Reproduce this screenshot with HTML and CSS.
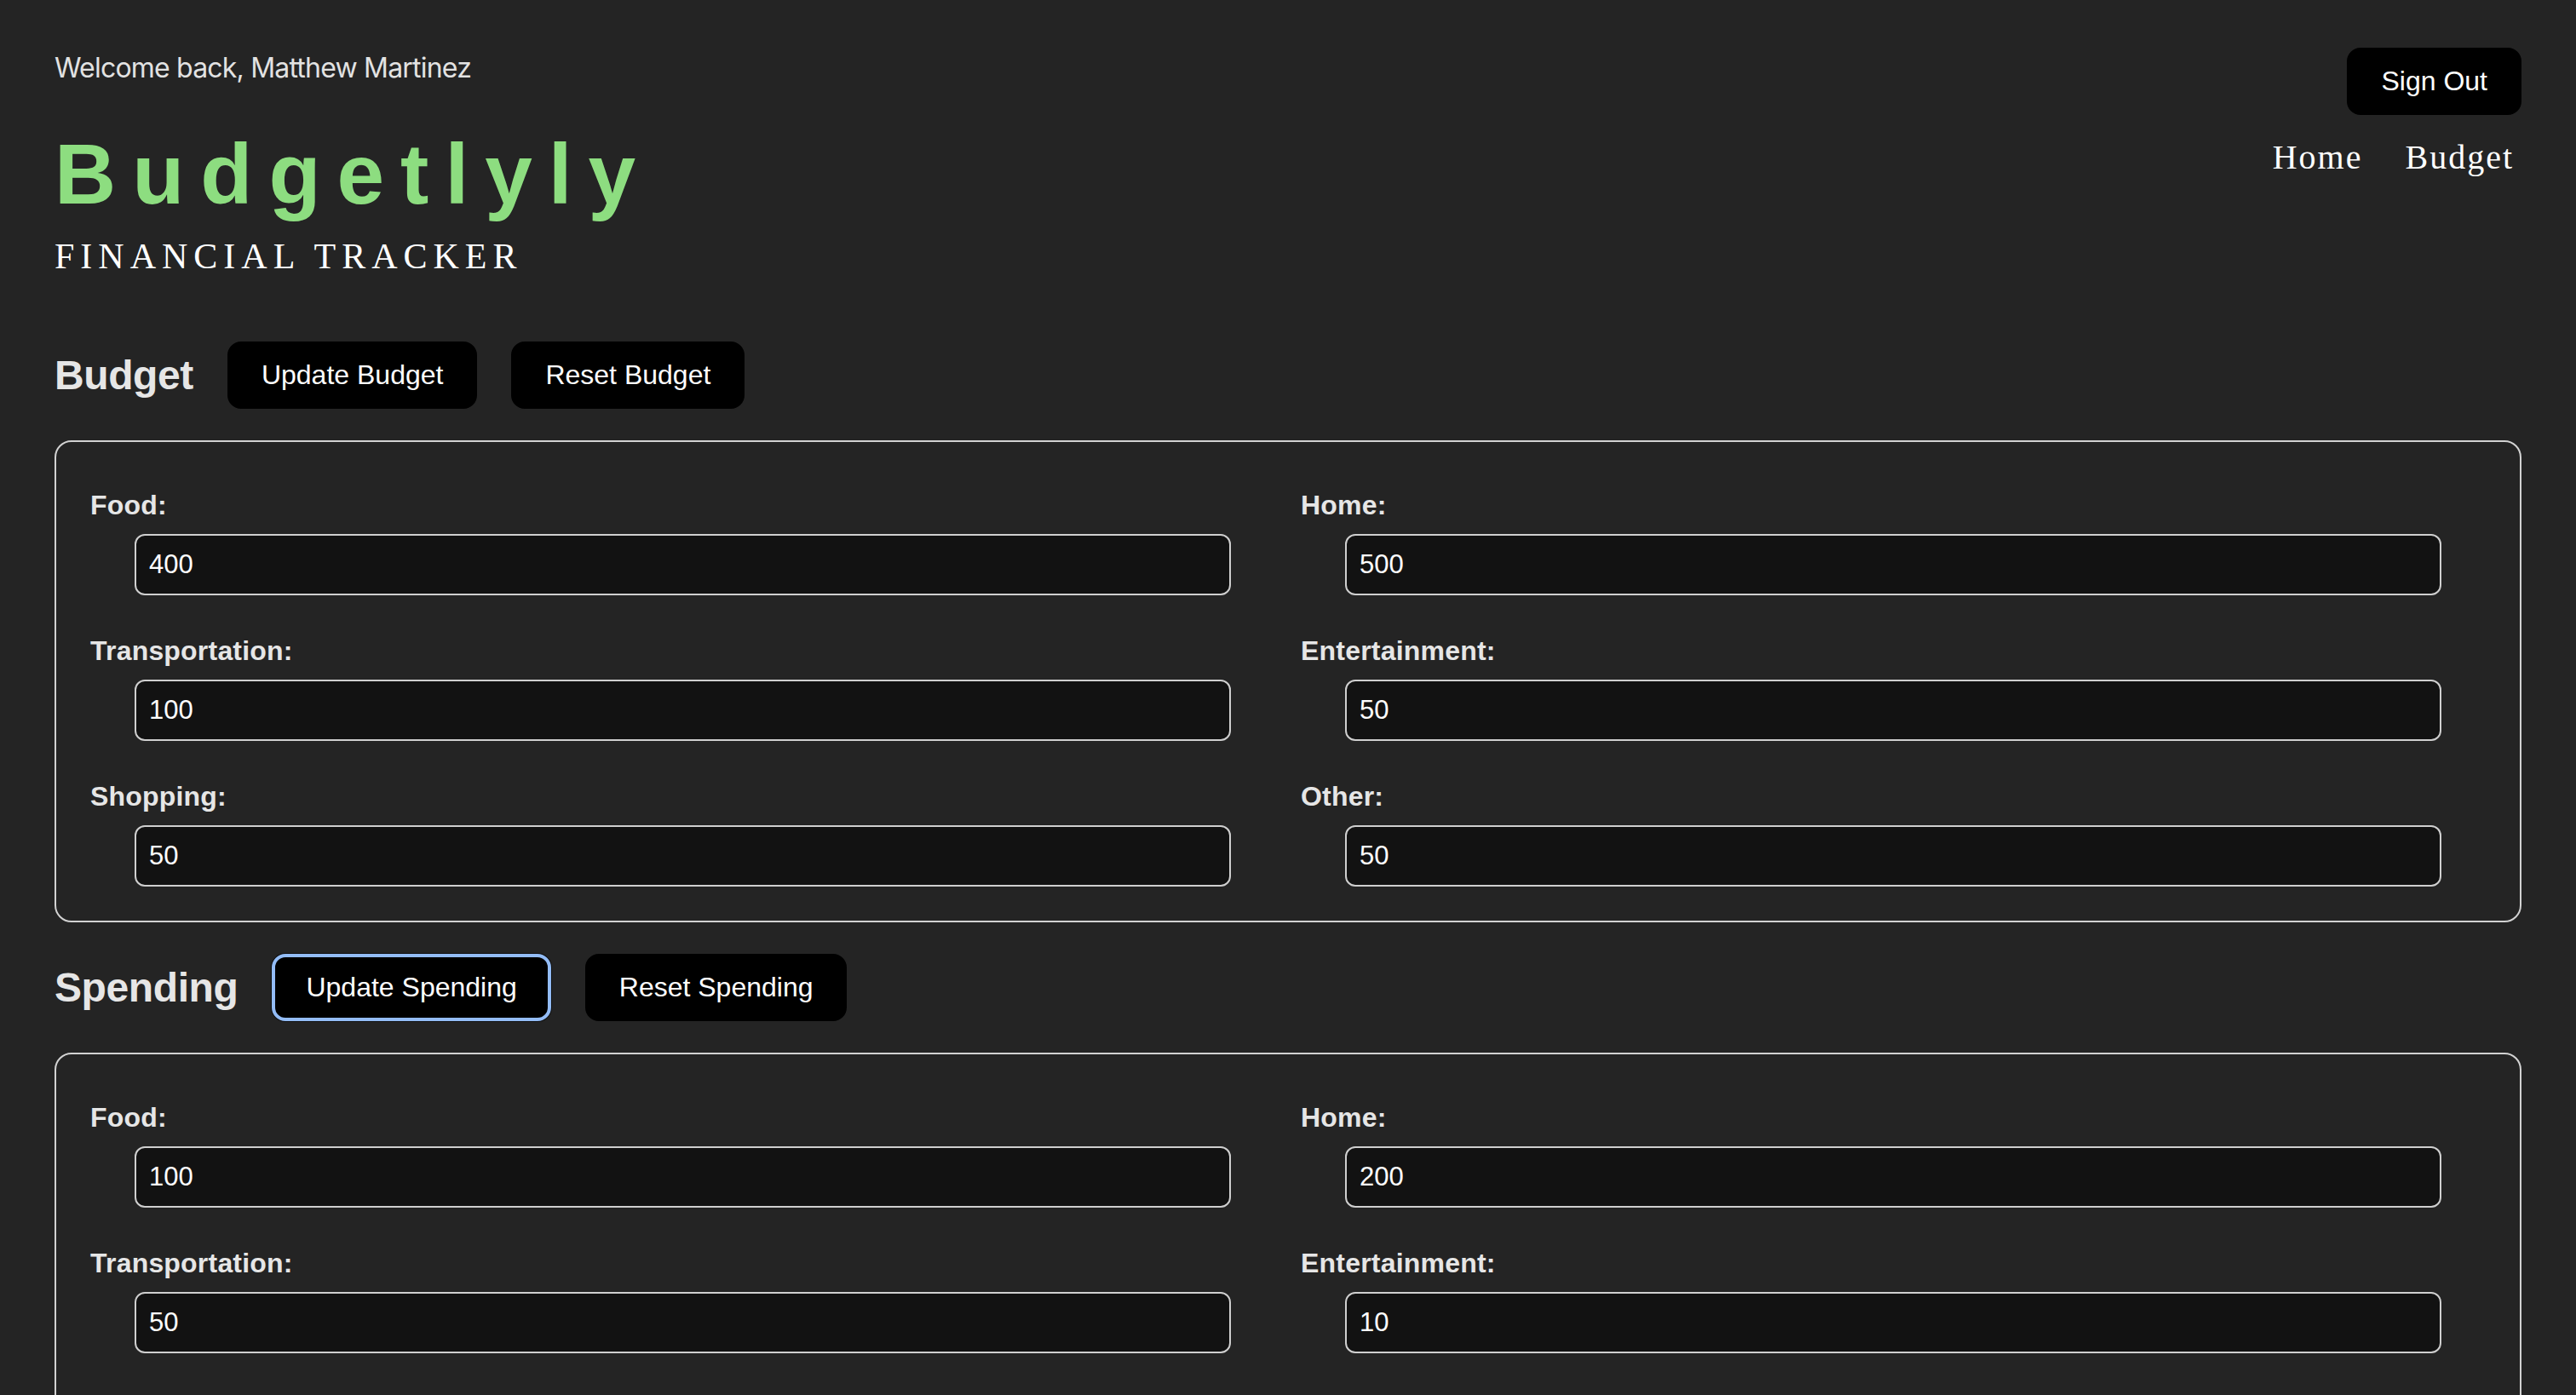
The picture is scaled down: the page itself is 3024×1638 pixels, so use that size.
FILE: index.html
```html
<!DOCTYPE html>
<html lang="en">
<head>
<meta charset="utf-8">
<title>Budgetlyly</title>
<link rel="stylesheet" href="styles.css">
</head>
<body>
<div class="page">
  <header class="top">
    <div class="brand">
      <p class="welcome">Welcome back, Matthew Martinez</p>
      <h1 class="logo">Budgetlyly</h1>
      <p class="tagline">Financial Tracker</p>
    </div>
    <div class="top-right">
      <button class="btn" type="button">Sign Out</button>
      <nav class="nav">
        <a class="nav-link" href="#">Home</a>
        <a class="nav-link" href="#">Budget</a>
      </nav>
    </div>
  </header>

  <section class="section">
    <div class="section-head">
      <h2 class="section-title">Budget</h2>
      <button class="btn" type="button">Update Budget</button>
      <button class="btn" type="button">Reset Budget</button>
    </div>
    <div class="box">
      <div class="field"><label class="field-label">Food:</label><input class="field-input" type="text" value="400"></div>
      <div class="field"><label class="field-label">Home:</label><input class="field-input" type="text" value="500"></div>
      <div class="field"><label class="field-label">Transportation:</label><input class="field-input" type="text" value="100"></div>
      <div class="field"><label class="field-label">Entertainment:</label><input class="field-input" type="text" value="50"></div>
      <div class="field"><label class="field-label">Shopping:</label><input class="field-input" type="text" value="50"></div>
      <div class="field"><label class="field-label">Other:</label><input class="field-input" type="text" value="50"></div>
    </div>
  </section>

  <section class="section">
    <div class="section-head">
      <h2 class="section-title">Spending</h2>
      <button class="btn btn-focus" type="button">Update Spending</button>
      <button class="btn" type="button">Reset Spending</button>
    </div>
    <div class="box">
      <div class="field"><label class="field-label">Food:</label><input class="field-input" type="text" value="100"></div>
      <div class="field"><label class="field-label">Home:</label><input class="field-input" type="text" value="200"></div>
      <div class="field"><label class="field-label">Transportation:</label><input class="field-input" type="text" value="50"></div>
      <div class="field"><label class="field-label">Entertainment:</label><input class="field-input" type="text" value="10"></div>
      <div class="field"><label class="field-label">Shopping:</label><input class="field-input" type="text" value="20"></div>
      <div class="field"><label class="field-label">Other:</label><input class="field-input" type="text" value="10"></div>
    </div>
  </section>
</div>
</body>
</html>
```

FILE: styles.css
```css
html, body {
  margin: 0;
  padding: 0;
  background: #242424;
}

body {
  font-family: "Liberation Sans", Arial, sans-serif;
  color: #e6e6e6;
}

.page {
  padding: 0 64px 80px;
}

.top {
  display: flex;
  justify-content: space-between;
  align-items: flex-start;
  padding-top: 56px;
}

.brand {
  display: flex;
  flex-direction: column;
}

.welcome {
  margin: 5px 0 0;
  font-family: Inter, "Noto Sans", sans-serif;
  font-size: 32px;
  line-height: 38px;
  letter-spacing: -0.8px;
  color: #e2e2e2;
}

.logo {
  margin: 48px 0 0;
  font-family: "Liberation Sans", Arial, sans-serif;
  font-weight: 700;
  font-size: 100px;
  line-height: 115px;
  letter-spacing: 19px;
  color: #8ddd80;
}

.tagline {
  margin: 15px 0 0;
  font-family: "Liberation Serif", "Times New Roman", serif;
  font-size: 42px;
  line-height: 48px;
  letter-spacing: 7px;
  text-transform: uppercase;
  color: #ffffff;
}

.top-right {
  display: flex;
  flex-direction: column;
  align-items: flex-end;
}

.btn {
  font-family: "Liberation Sans", Arial, sans-serif;
  font-size: 32px;
  line-height: 37px;
  padding: 19px 38px;
  border: 2px solid #000;
  border-radius: 16px;
  background: #000;
  color: #fff;
  cursor: pointer;
}

.btn-focus {
  outline: 4px solid #93bcf6;
  outline-offset: -4px;
  box-shadow: 0 0 0 1px #101010;
}

.nav {
  display: flex;
  gap: 50px;
  margin-top: 27px;
  padding-right: 9px;
}

.nav-link {
  font-family: "Liberation Serif", "Times New Roman", serif;
  font-size: 40px;
  line-height: 46px;
  letter-spacing: 2px;
  color: #ffffff;
  text-decoration: none;
}

.section {
  margin-top: 76px;
}

.section + .section {
  margin-top: 37px;
}

.section-head {
  display: flex;
  align-items: center;
  gap: 40px;
}

.section-title {
  margin: 0;
  font-family: "Liberation Sans", Arial, sans-serif;
  font-weight: 700;
  font-size: 48px;
  line-height: 55px;
  letter-spacing: -0.4px;
  color: #e6e6e6;
}

.box {
  margin-top: 37px;
  border: 2px solid #d2d2d2;
  border-radius: 20px;
  padding: 40px;
  display: grid;
  grid-template-columns: 1fr 1fr;
  column-gap: 30px;
  row-gap: 31px;
}

.field {
  display: flex;
  flex-direction: column;
  padding-top: 16px;
}

.field-label {
  font-family: "Liberation Sans", Arial, sans-serif;
  font-weight: 700;
  font-size: 32px;
  line-height: 37px;
  letter-spacing: 0.2px;
  color: #e6e6e6;
  margin-bottom: 15px;
}

.field-input {
  box-sizing: border-box;
  height: 72px;
  margin: 0 52px;
  padding: 0 15px;
  border: 2px solid #cfcfcf;
  border-radius: 12px;
  background: #121212;
  color: #ffffff;
  font-family: "Liberation Sans", Arial, sans-serif;
  font-size: 31px;
}
```
